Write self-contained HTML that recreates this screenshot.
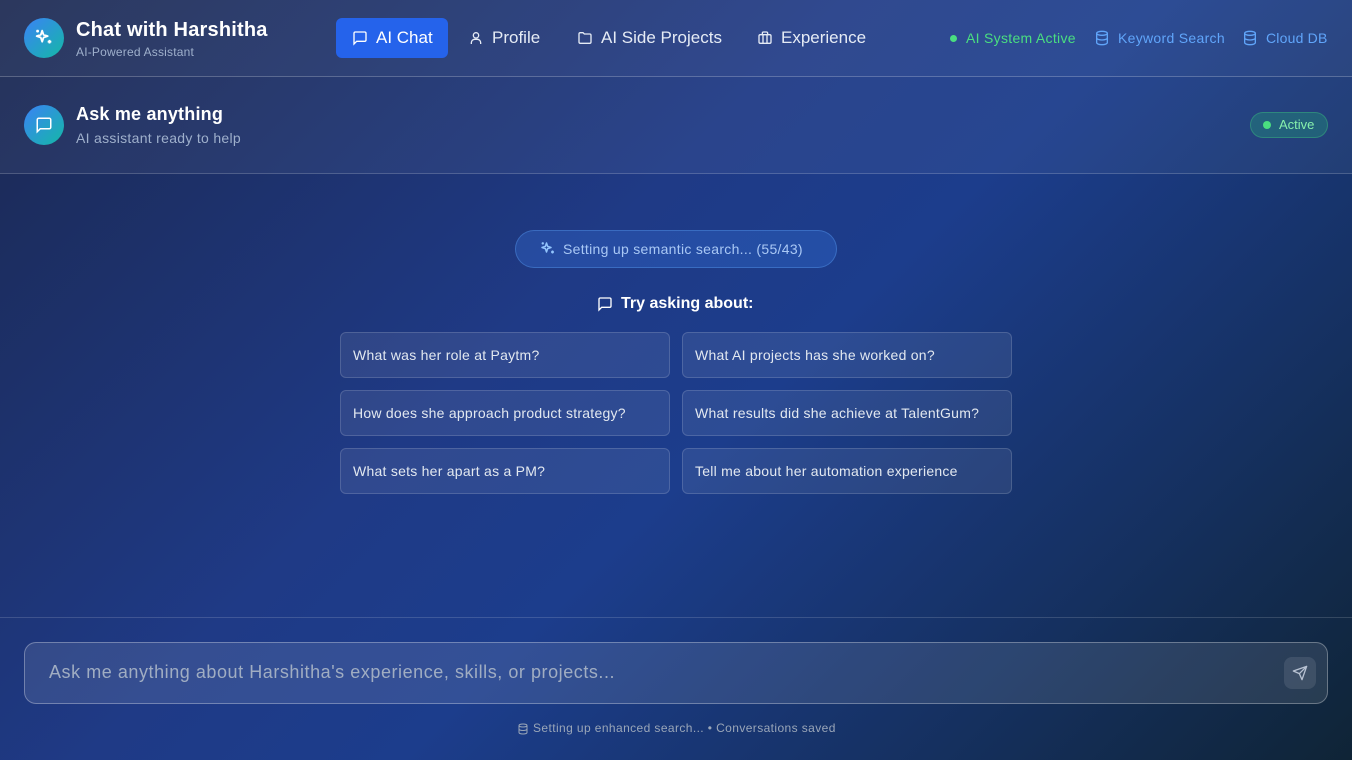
<!DOCTYPE html>
<html><head><meta charset="utf-8"><style>
*{box-sizing:border-box;margin:0;padding:0}
body{width:1352px;height:760px;overflow:hidden;font-family:"Liberation Sans",sans-serif;color:#fff;
background:linear-gradient(135deg,#1b2850 0%,#1f3a86 40%,#1c3d8c 55%,#15305f 80%,#0f2436 100%);position:relative}
.hdr{position:absolute;left:0;top:0;width:1352px;height:77px;background:rgba(255,255,255,0.08);border-bottom:1px solid rgba(255,255,255,0.22)}
.sub{position:absolute;left:0;top:77px;width:1352px;height:97px;background:rgba(255,255,255,0.05);border-bottom:1px solid rgba(255,255,255,0.18)}
.circ{position:absolute;width:40px;height:40px;border-radius:50%;background:linear-gradient(135deg,#3b82f6,#14b8a6);display:flex;align-items:center;justify-content:center}
.abs{position:absolute;white-space:nowrap}
.nav{position:absolute;top:18px;height:40px;display:flex;align-items:center;font-size:17px;color:#e5ebf5;gap:8px}
.btn{position:absolute;width:330px;height:46px;border:1px solid rgba(255,255,255,0.15);background:rgba(255,255,255,0.08);border-radius:6px;font-size:14px;color:#e2e8f0;padding:14px 12px;letter-spacing:0.25px}
</style></head><body>
<div class="hdr"></div><div class="sub"></div>
<div class="circ" style="left:24px;top:18px"><svg width="22" height="22" viewBox="0 0 24 24" fill="none" stroke="#fff" stroke-width="2" stroke-linejoin="round"><path d="M10 4l1.5 4.5L16 10l-4.5 1.5L10 16l-1.5-4.5L4 10l4.5-1.5z"/><path d="M18 14v4M16 16h4M5 3v3M3.5 4.5h3"/></svg></div>
<div class="abs" style="left:76px;top:19px;font-size:20px;font-weight:bold;letter-spacing:0.2px">Chat with Harshitha</div>
<div class="abs" style="left:76px;top:45px;font-size:12px;color:#9fb0cc;letter-spacing:0.2px">AI-Powered Assistant</div>
<div style="position:absolute;left:336px;top:18px;width:112px;height:40px;background:#2563eb;border-radius:6px"></div>
<div class="nav" style="left:352px"><svg width="16" height="16" viewBox="0 0 24 24" fill="none" stroke="#fff" stroke-width="2"><path d="M21 15a2 2 0 0 1-2 2H7l-4 4V5a2 2 0 0 1 2-2h14a2 2 0 0 1 2 2z"/></svg><span style="color:#fff">AI Chat</span></div>
<div class="nav" style="left:468px"><svg width="16" height="16" viewBox="0 0 24 24" fill="none" stroke="#e5ebf5" stroke-width="2"><circle cx="12" cy="8" r="4"/><path d="M5 21v-2a5 5 0 0 1 5-5h4a5 5 0 0 1 5 5v2"/></svg>Profile</div>
<div class="nav" style="left:577px"><svg width="16" height="16" viewBox="0 0 24 24" fill="none" stroke="#e5ebf5" stroke-width="2"><path d="M3 6a2 2 0 0 1 2-2h4l2 2h8a2 2 0 0 1 2 2v10a2 2 0 0 1-2 2H5a2 2 0 0 1-2-2z"/></svg>AI Side Projects</div>
<div class="nav" style="left:757px"><svg width="16" height="16" viewBox="0 0 24 24" fill="none" stroke="#e5ebf5" stroke-width="2"><rect x="3" y="7" width="18" height="13" rx="2"/><path d="M8 7V5a2 2 0 0 1 2-2h4a2 2 0 0 1 2 2v2M9 7v13M15 7v13"/></svg>Experience</div>
<div class="abs" style="left:950px;top:35px;width:7px;height:7px;border-radius:50%;background:#4ade80"></div>
<div class="abs" style="left:966px;top:30px;font-size:14px;color:#4ade80;letter-spacing:0.3px">AI System Active</div>
<svg class="abs" style="left:1094px;top:30px" width="16" height="16" viewBox="0 0 24 24" fill="none" stroke="#60a5fa" stroke-width="2"><ellipse cx="12" cy="5" rx="8" ry="3"/><path d="M4 5v14c0 1.7 3.6 3 8 3s8-1.3 8-3V5M4 12c0 1.7 3.6 3 8 3s8-1.3 8-3"/></svg>
<div class="abs" style="left:1118px;top:30px;font-size:14px;color:#60a5fa;letter-spacing:0.3px">Keyword Search</div>
<svg class="abs" style="left:1242px;top:30px" width="16" height="16" viewBox="0 0 24 24" fill="none" stroke="#60a5fa" stroke-width="2"><ellipse cx="12" cy="5" rx="8" ry="3"/><path d="M4 5v14c0 1.7 3.6 3 8 3s8-1.3 8-3V5M4 12c0 1.7 3.6 3 8 3s8-1.3 8-3"/></svg>
<div class="abs" style="left:1266px;top:30px;font-size:14px;color:#60a5fa;letter-spacing:0.2px">Cloud DB</div>

<div class="circ" style="left:24px;top:105px;background:linear-gradient(135deg,#3b82f6,#14b8a6)"><svg width="18" height="18" viewBox="0 0 24 24" fill="none" stroke="#fff" stroke-width="2"><path d="M21 15a2 2 0 0 1-2 2H7l-4 4V5a2 2 0 0 1 2-2h14a2 2 0 0 1 2 2z"/></svg></div>
<div class="abs" style="left:76px;top:104px;font-size:18px;font-weight:bold;letter-spacing:0.2px">Ask me anything</div>
<div class="abs" style="left:76px;top:130px;font-size:14px;color:#9fb0cc;letter-spacing:0.3px">AI assistant ready to help</div>
<div class="abs" style="left:1250px;top:112px;width:78px;height:26px;border-radius:13px;background:rgba(34,160,120,0.35);border:1px solid rgba(74,222,128,0.3)"></div>
<div class="abs" style="left:1263px;top:121px;width:8px;height:8px;border-radius:50%;background:#4ade80"></div>
<div class="abs" style="left:1279px;top:117px;font-size:13px;color:#86efac">Active</div>

<div class="abs" style="left:515px;top:230px;width:322px;height:38px;border-radius:19px;background:rgba(59,130,246,0.25);border:1px solid rgba(96,165,250,0.35)"></div>
<svg class="abs" style="left:539px;top:240px" width="18" height="18" viewBox="0 0 24 24" fill="none" stroke="#93c5fd" stroke-width="2" stroke-linejoin="round"><path d="M10 4l1.5 4.5L16 10l-4.5 1.5L10 16l-1.5-4.5L4 10l4.5-1.5z"/><path d="M18 14v4M16 16h4M5 3v3M3.5 4.5h3"/></svg>
<div class="abs" style="left:563px;top:241px;font-size:14px;color:#a9c8f5;letter-spacing:0.3px">Setting up semantic search... (55/43)</div>
<svg class="abs" style="left:597px;top:296px" width="16" height="16" viewBox="0 0 24 24" fill="none" stroke="#fff" stroke-width="2"><path d="M21 15a2 2 0 0 1-2 2H7l-4 4V5a2 2 0 0 1 2-2h14a2 2 0 0 1 2 2z"/></svg>
<div class="abs" style="left:621px;top:295px;font-size:16px;font-weight:bold">Try asking about:</div>

<div class="btn" style="left:340px;top:332px">What was her role at Paytm?</div>
<div class="btn" style="left:682px;top:332px">What AI projects has she worked on?</div>
<div class="btn" style="left:340px;top:390px">How does she approach product strategy?</div>
<div class="btn" style="left:682px;top:390px">What results did she achieve at TalentGum?</div>
<div class="btn" style="left:340px;top:448px">What sets her apart as a PM?</div>
<div class="btn" style="left:682px;top:448px">Tell me about her automation experience</div>

<div class="abs" style="left:0;top:617px;width:1352px;height:1px;background:rgba(255,255,255,0.15)"></div>
<div class="abs" style="left:24px;top:642px;width:1304px;height:62px;border-radius:12px;background:rgba(255,255,255,0.1);border:1px solid rgba(255,255,255,0.3)"></div>
<div class="abs" style="left:49px;top:662px;font-size:18px;color:#a0adc2;letter-spacing:0.55px">Ask me anything about Harshitha's experience, skills, or projects...</div>
<div class="abs" style="left:1284px;top:657px;width:32px;height:32px;border-radius:8px;background:rgba(255,255,255,0.1)"></div>
<svg class="abs" style="left:1292px;top:665px" width="16" height="16" viewBox="0 0 24 24" fill="none" stroke="#b8c2d2" stroke-width="2" stroke-linejoin="round"><path d="M22 2L11 13M22 2l-7 20-4-9-9-4z"/></svg>
<svg class="abs" style="left:517px;top:723px" width="12" height="12" viewBox="0 0 24 24" fill="none" stroke="#9aa6b8" stroke-width="2"><ellipse cx="12" cy="5" rx="8" ry="3"/><path d="M4 5v14c0 1.7 3.6 3 8 3s8-1.3 8-3V5M4 12c0 1.7 3.6 3 8 3s8-1.3 8-3"/></svg>
<div class="abs" style="left:533px;top:721px;font-size:12px;color:#9aa6b8;letter-spacing:0.4px">Setting up enhanced search... • Conversations saved</div>
</body></html>
